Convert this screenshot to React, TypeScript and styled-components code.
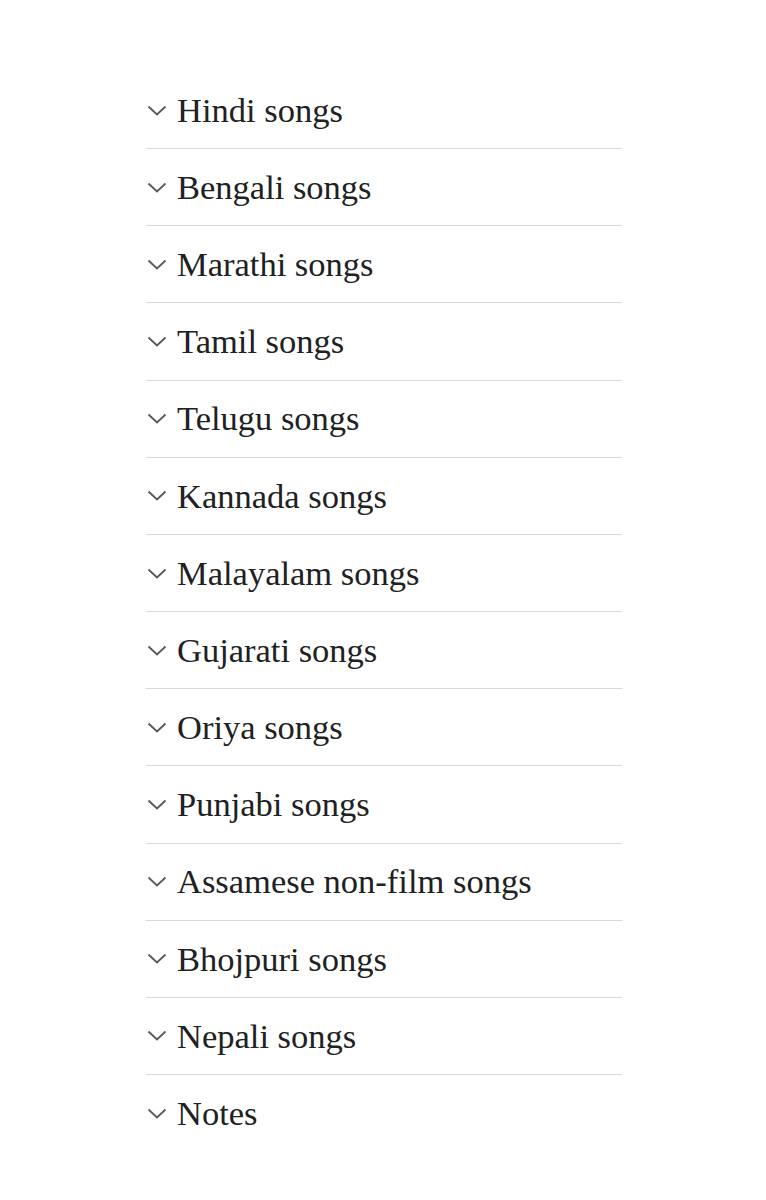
import React from "react";
import styled, { createGlobalStyle } from "styled-components";

const GlobalStyle = createGlobalStyle`
	html, body {
		margin: 0;
		padding: 0;
		background: #ffffff;
	}
	body {
		font-family: "Liberation Serif", "DejaVu Serif", serif;
		color: #202122;
	}
`;

const Sections = styled.div`
	width: 476px;
	margin: 72px 0 0 146px;
`;

const Section = styled.div<{ $last?: boolean }>`
	display: flex;
	align-items: center;
	height: 76.17px;
	border-bottom: ${({ $last }) => ($last ? "none" : "1px solid #d7d9dc")};
	cursor: pointer;
`;

const Chevron = styled.svg`
	width: 20px;
	height: 11px;
	margin: 0 10px 0 1px;
	flex-shrink: 0;
`;

const Heading = styled.h2`
	margin: 0;
	font-size: 34.5px;
	font-weight: normal;
	line-height: 1;
	color: #202122;
`;

const headings: string[] = [
	"Hindi songs",
	"Bengali songs",
	"Marathi songs",
	"Tamil songs",
	"Telugu songs",
	"Kannada songs",
	"Malayalam songs",
	"Gujarati songs",
	"Oriya songs",
	"Punjabi songs",
	"Assamese non-film songs",
	"Bhojpuri songs",
	"Nepali songs",
	"Notes",
];

const SectionHeading = ({ title, last }: { title: string; last: boolean }) => (
	<Section $last={last}>
		<Chevron viewBox="0 0 20 11" fill="none">
			<path d="M1.5 1.5 L10 9.5 L18.5 1.5" stroke="#54595d" strokeWidth="1.8" />
		</Chevron>
		<Heading>{title}</Heading>
	</Section>
);

export default function App() {
	return (
		<>
			<GlobalStyle />
			<Sections>
				{headings.map((title, index) => (
					<SectionHeading
						title={title}
						last={index === headings.length - 1}
						key={`SECTION_${index}`}
					/>
				))}
			</Sections>
		</>
	);
}
